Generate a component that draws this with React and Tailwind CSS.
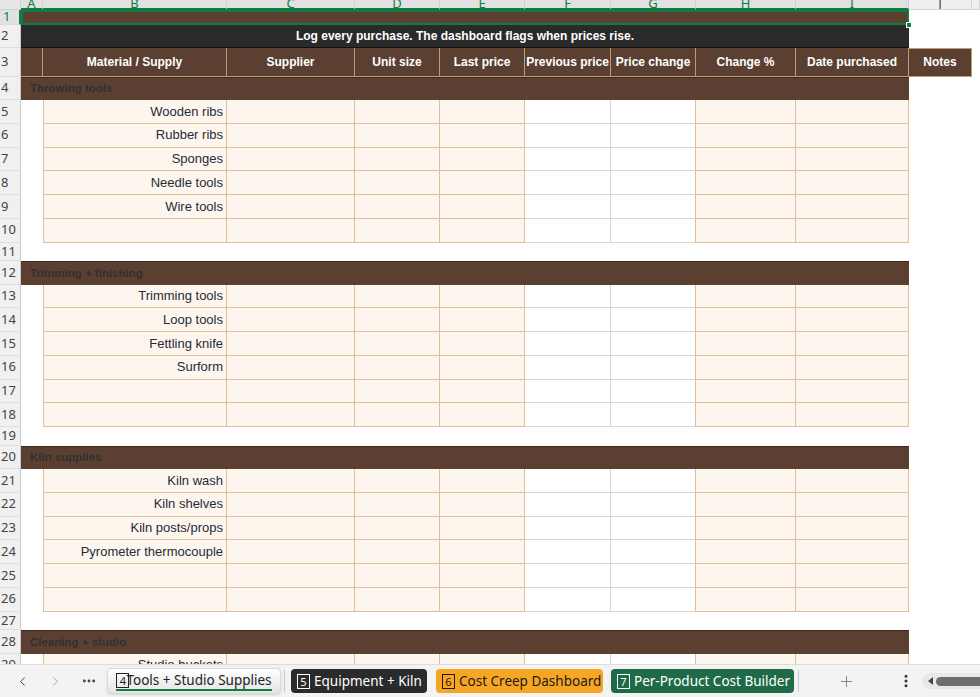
import React from 'react';
import { ChevronLeft, ChevronRight, Ellipsis, EllipsisVertical, Plus } from 'lucide-react';

// sheet columns: row header, A..J, then the sliver of K
const GRID = 'grid grid-cols-[21px_22px_184px_128px_85px_85px_86px_85px_100px_113px_63px_1fr]';
const CREAM = 'bg-[#fdf6ee] border-r border-b border-[#e0bf98]';
const HEAD = 'bg-[#5b4032] border-r border-b border-[#c09a72] flex items-center justify-center text-white font-bold text-[12px] whitespace-nowrap';

const LETTERS = ['A', 'B', 'C', 'D', 'E', 'F', 'G', 'H', 'I', 'J', ''];
const COLUMNS = ['Material / Supply', 'Supplier', 'Unit size', 'Last price', 'Previous price', 'Price change', 'Change %', 'Date purchased'];

const SECTIONS = [
  { title: 'Throwing tools', items: ['Wooden ribs', 'Rubber ribs', 'Sponges', 'Needle tools', 'Wire tools', ''] },
  { title: 'Trimming + finishing', items: ['Trimming tools', 'Loop tools', 'Fettling knife', 'Surform', '', ''] },
  { title: 'Kiln supplies', items: ['Kiln wash', 'Kiln shelves', 'Kiln posts/props', 'Pyrometer thermocouple', '', ''] },
  { title: 'Cleaning + studio', items: ['Studio buckets'] },
];

function ColumnHeaders() {
  return (
    <div className={`${GRID} h-[10px] shrink-0 font-['Noto_Sans',sans-serif] text-[13px]`}>
      <div className="bg-[#e6e6e6] border-r border-b border-[#cfcfcf]" />
      {LETTERS.map((l, i) =>
        i < 9 ? (
          <div key={i} className="flex items-end justify-center overflow-hidden bg-[#e1e1e1] border-r border-r-[#cfcfcf] border-b-2 border-b-[#107c41] text-[#107c41]">
            <span className="leading-[10px]">{l}</span>
          </div>
        ) : (
          <div key={i} className="flex items-end justify-center overflow-hidden bg-[#efefef] border-r border-b border-[#d4d4d4] text-[#444]">
            <span className="leading-[10px]">{l}</span>
          </div>
        )
      )}
    </div>
  );
}

function RowNum({ n, active }) {
  if (active) {
    return (
      <div className="flex items-center pl-[3px] bg-[#e1e1e1] border-r-2 border-r-[#107c41] border-b border-b-[#dcdcdc] text-[13px] text-[#107c41] font-['Noto_Sans',sans-serif] overflow-hidden">
        {n}
      </div>
    );
  }
  return (
    <div className="flex items-center pl-[1px] bg-[#f0f0f0] border-r border-r-[#c9c9c9] border-b border-b-[#dedede] text-[13px] text-[#444] font-['Noto_Sans',sans-serif] overflow-hidden">
      {n}
    </div>
  );
}

function TitleRow() {
  return (
    <div className={`${GRID} h-[15px]`}>
      <RowNum n={1} active />
      <div className="col-span-9 relative bg-[#5b4032]">
        <div className="absolute inset-0 border-2 border-[#107c41]" />
        <div className="absolute -right-[3px] -bottom-[3px] w-[6px] h-[6px] bg-[#107c41] border border-white" />
      </div>
      <div className="bg-white" />
      <div className="bg-white" />
    </div>
  );
}

function NoteRow() {
  return (
    <div className={`${GRID} h-[23px]`}>
      <RowNum n={2} />
      <div className="col-span-9 bg-[#2a2a2a] border-b border-[#111] flex items-center justify-center text-white font-bold text-[12px]">
        Log every purchase. The dashboard flags when prices rise.
      </div>
      <div className="bg-white" />
      <div className="bg-white" />
    </div>
  );
}

function HeaderRow() {
  return (
    <div className={`${GRID} h-[28.5px]`}>
      <RowNum n={3} />
      <div className="bg-[#5b4032] border-r border-b border-[#c09a72]" />
      {COLUMNS.map((c) => (
        <div key={c} className={HEAD}>{c}</div>
      ))}
      <div className="bg-[#5b4032] border border-l-0 border-[#c09a72] flex items-center justify-center text-white font-bold text-[12px]">
        Notes
      </div>
      <div className="bg-white" />
    </div>
  );
}

function SectionRow({ n, title }) {
  return (
    <div className={`${GRID} h-[23.5px]`}>
      <RowNum n={n} />
      <div className="col-span-9 bg-[#5b4032] border-t border-[#3e2a20] flex items-center pl-[9px] text-[11.5px] font-bold text-[#303030]">
        {title}
      </div>
      <div className="bg-white" />
      <div className="bg-white" />
    </div>
  );
}

function BlankRow({ n }) {
  return (
    <div className={`${GRID} h-[18.5px]`}>
      <RowNum n={n} />
      <div className="col-span-11 bg-white" />
    </div>
  );
}

function ItemRow({ n, label }) {
  return (
    <div className={`${GRID} h-[23.75px]`}>
      <RowNum n={n} />
      <div className="bg-white" />
      <div className="bg-[#fdf6ee] border-x border-b border-[#e0bf98] flex items-center justify-end pr-[3px] text-[13px] text-[#1f2b38] whitespace-nowrap overflow-hidden">
        {label}
      </div>
      <div className={CREAM} />
      <div className={CREAM} />
      <div className={CREAM} />
      <div className="bg-white border-r border-b border-[#d6d6d6]" />
      <div className="bg-white border-b border-b-[#d6d6d6] border-r border-r-[#e0bf98]" />
      <div className={CREAM} />
      <div className={CREAM} />
      <div className="bg-white" />
      <div className="bg-white" />
    </div>
  );
}

function Badge({ d }) {
  return (
    <span className="inline-flex items-center justify-center w-[13px] h-[15px] border border-current text-[11px] leading-none shrink-0">
      {d}
    </span>
  );
}

function SheetTabs() {
  return (
    <div className="h-[33px] shrink-0 bg-[#f3f3f3] border-t border-[#dcdcdc] flex items-center font-['Noto_Sans',sans-serif] text-[13.5px]">
      <div className="w-[33px] ml-[6px] flex justify-center text-[#444]"><ChevronLeft size={15} strokeWidth={1.6} /></div>
      <div className="w-[33px] flex justify-center text-[#aaa]"><ChevronRight size={15} strokeWidth={1.6} /></div>
      <div className="w-[33px] flex justify-center text-[#444]"><Ellipsis size={16} strokeWidth={2.4} /></div>
      <div className="ml-[2px] w-[174px] h-[26px] rounded-[4px] bg-gradient-to-b from-white to-[#e4e4e4] border border-[#d8d8d8] shadow-sm flex items-center justify-center text-[#222]">
        <span className="flex items-center h-[20px] border-b-2 border-[#107c41] pt-[1px]">
          <span className="-mr-[3px]"><Badge d="4" /></span>
          Tools + Studio Supplies
        </span>
      </div>
      <div className="ml-[3px] mr-[6px] w-px h-[22px] bg-[#c8c8c8]" />
      <div className="w-[136px] h-[24px] rounded-[4px] bg-[#2b2b2b] text-white flex items-center gap-[4px] pl-[6px] whitespace-nowrap">
        <Badge d="5" />
        Equipment + Kiln
      </div>
      <div className="ml-[9px] w-[167px] h-[24px] rounded-[4px] bg-[#f6a623] text-[#1a1a1a] flex items-center gap-[4px] pl-[6px] whitespace-nowrap">
        <Badge d="6" />
        Cost Creep Dashboard
      </div>
      <div className="ml-[8px] w-[183px] h-[24px] rounded-[4px] bg-[#1f6b48] text-white flex items-center gap-[4px] pl-[6px] whitespace-nowrap">
        <Badge d="7" />
        Per-Product Cost Builder
      </div>
      <div className="ml-[4px] w-px h-[22px] bg-[#c8c8c8]" />
      <div className="w-[94px] flex justify-center text-[#888]"><Plus size={17} strokeWidth={1.5} /></div>
      <div className="w-[26px] flex justify-center text-[#333]"><EllipsisVertical size={16} strokeWidth={2.6} /></div>
      <div className="ml-[3px] flex-1 h-[16px] rounded-l-full bg-[#e8e8e8] flex items-center pl-[6px] gap-[3px]">
        <span className="w-0 h-0 border-y-[4px] border-y-transparent border-r-[5px] border-r-[#444]" />
        <span className="flex-1 h-[9px] rounded-l-full bg-[#6e6e6e]" />
      </div>
    </div>
  );
}

export default function App() {
  let n = 4;
  const rows = [];
  SECTIONS.forEach((s, si) => {
    if (si > 0) {
      const b = n++;
      rows.push(<BlankRow key={'b' + b} n={b} />);
    }
    const h = n++;
    rows.push(<SectionRow key={'s' + h} n={h} title={s.title} />);
    s.items.forEach((item) => {
      const r = n++;
      rows.push(<ItemRow key={'i' + r} n={r} label={item} />);
    });
  });

  return (
    <div className="w-[980px] h-[697px] overflow-hidden flex flex-col bg-white font-['Liberation_Sans',Arial,sans-serif]">
      <ColumnHeaders />
      <div className="flex-1 min-h-0 overflow-hidden">
        <TitleRow />
        <NoteRow />
        <HeaderRow />
        {rows}
      </div>
      <SheetTabs />
    </div>
  );
}
